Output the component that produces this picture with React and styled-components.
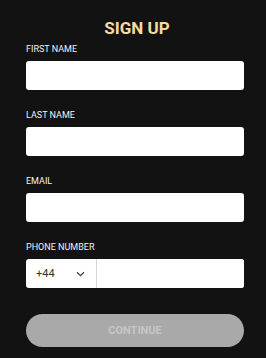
import React from "react"
import styled, { createGlobalStyle } from "styled-components"

const GlobalStyle = createGlobalStyle`
  html, body {
    margin: 0;
    padding: 0;
    background: #121212;
  }
  body {
    font-family: Roboto, "Liberation Sans", sans-serif;
  }
`;

const Page = styled.div`
  width: 266px;
  min-height: 358px;
  box-sizing: border-box;
  padding: 18px 22px 0 26px;
  display: flex;
  flex-direction: column;
  background: #121212;
`;

const Title = styled.h1`
  margin: 0 0 6px;
  font-size: 17px;
  line-height: 20px;
  font-weight: 700;
  text-align: center;
  color: #f4dc9e;
  padding-left: 4px;
`;

const Field = styled.div`
  display: flex;
  flex-direction: column;
  margin-bottom: 20px;
`;

const Label = styled.label`
  font-size: 9px;
  line-height: 11px;
  color: #f2f2f2;
  text-transform: uppercase;
  margin-bottom: 6px;
`;

const Input = styled.input`
  height: 29px;
  box-sizing: border-box;
  border: none;
  border-radius: 3px;
  background: #fff;
  padding: 0 10px;
  font-size: 11px;
  font-family: inherit;
  outline: none;
`;

const PhoneBox = styled.div`
  height: 29px;
  display: flex;
  background: #fff;
  border-radius: 3px;
  overflow: hidden;
`;

const CountryCode = styled.div`
  width: 71px;
  box-sizing: border-box;
  display: flex;
  align-items: center;
  justify-content: space-between;
  padding: 0 11px 0 10px;
  border-right: 1px solid #d6d6d6;
  font-size: 11px;
  color: #333;
`;

const PhoneInput = styled.input`
  flex: 1;
  min-width: 0;
  border: none;
  outline: none;
  padding: 0 8px;
  font-size: 11px;
  font-family: inherit;
`;

const Button = styled.button`
  margin-top: 6px;
  height: 33px;
  border: none;
  border-radius: 17px;
  background: #a9a9a9;
  color: #c6c6c6;
  font-family: inherit;
  font-size: 11px;
  font-weight: 700;
  text-transform: uppercase;
`;

const Chevron = () => (
  <svg width="9" height="6" viewBox="0 0 9 6" fill="none">
    <path d="M1 1.2 4.5 4.6 8 1.2" stroke="#444" strokeWidth="1.3" />
  </svg>
)

const App = () => (
  <>
    <GlobalStyle />
    <Page>
      <Title>SIGN UP</Title>
      <Field>
        <Label>First Name</Label>
        <Input />
      </Field>
      <Field>
        <Label>Last Name</Label>
        <Input />
      </Field>
      <Field>
        <Label>Email</Label>
        <Input />
      </Field>
      <Field>
        <Label>Phone Number</Label>
        <PhoneBox>
          <CountryCode>
            <span>+44</span>
            <Chevron />
          </CountryCode>
          <PhoneInput />
        </PhoneBox>
      </Field>
      <Button disabled>Continue</Button>
    </Page>
  </>
)

export default App
